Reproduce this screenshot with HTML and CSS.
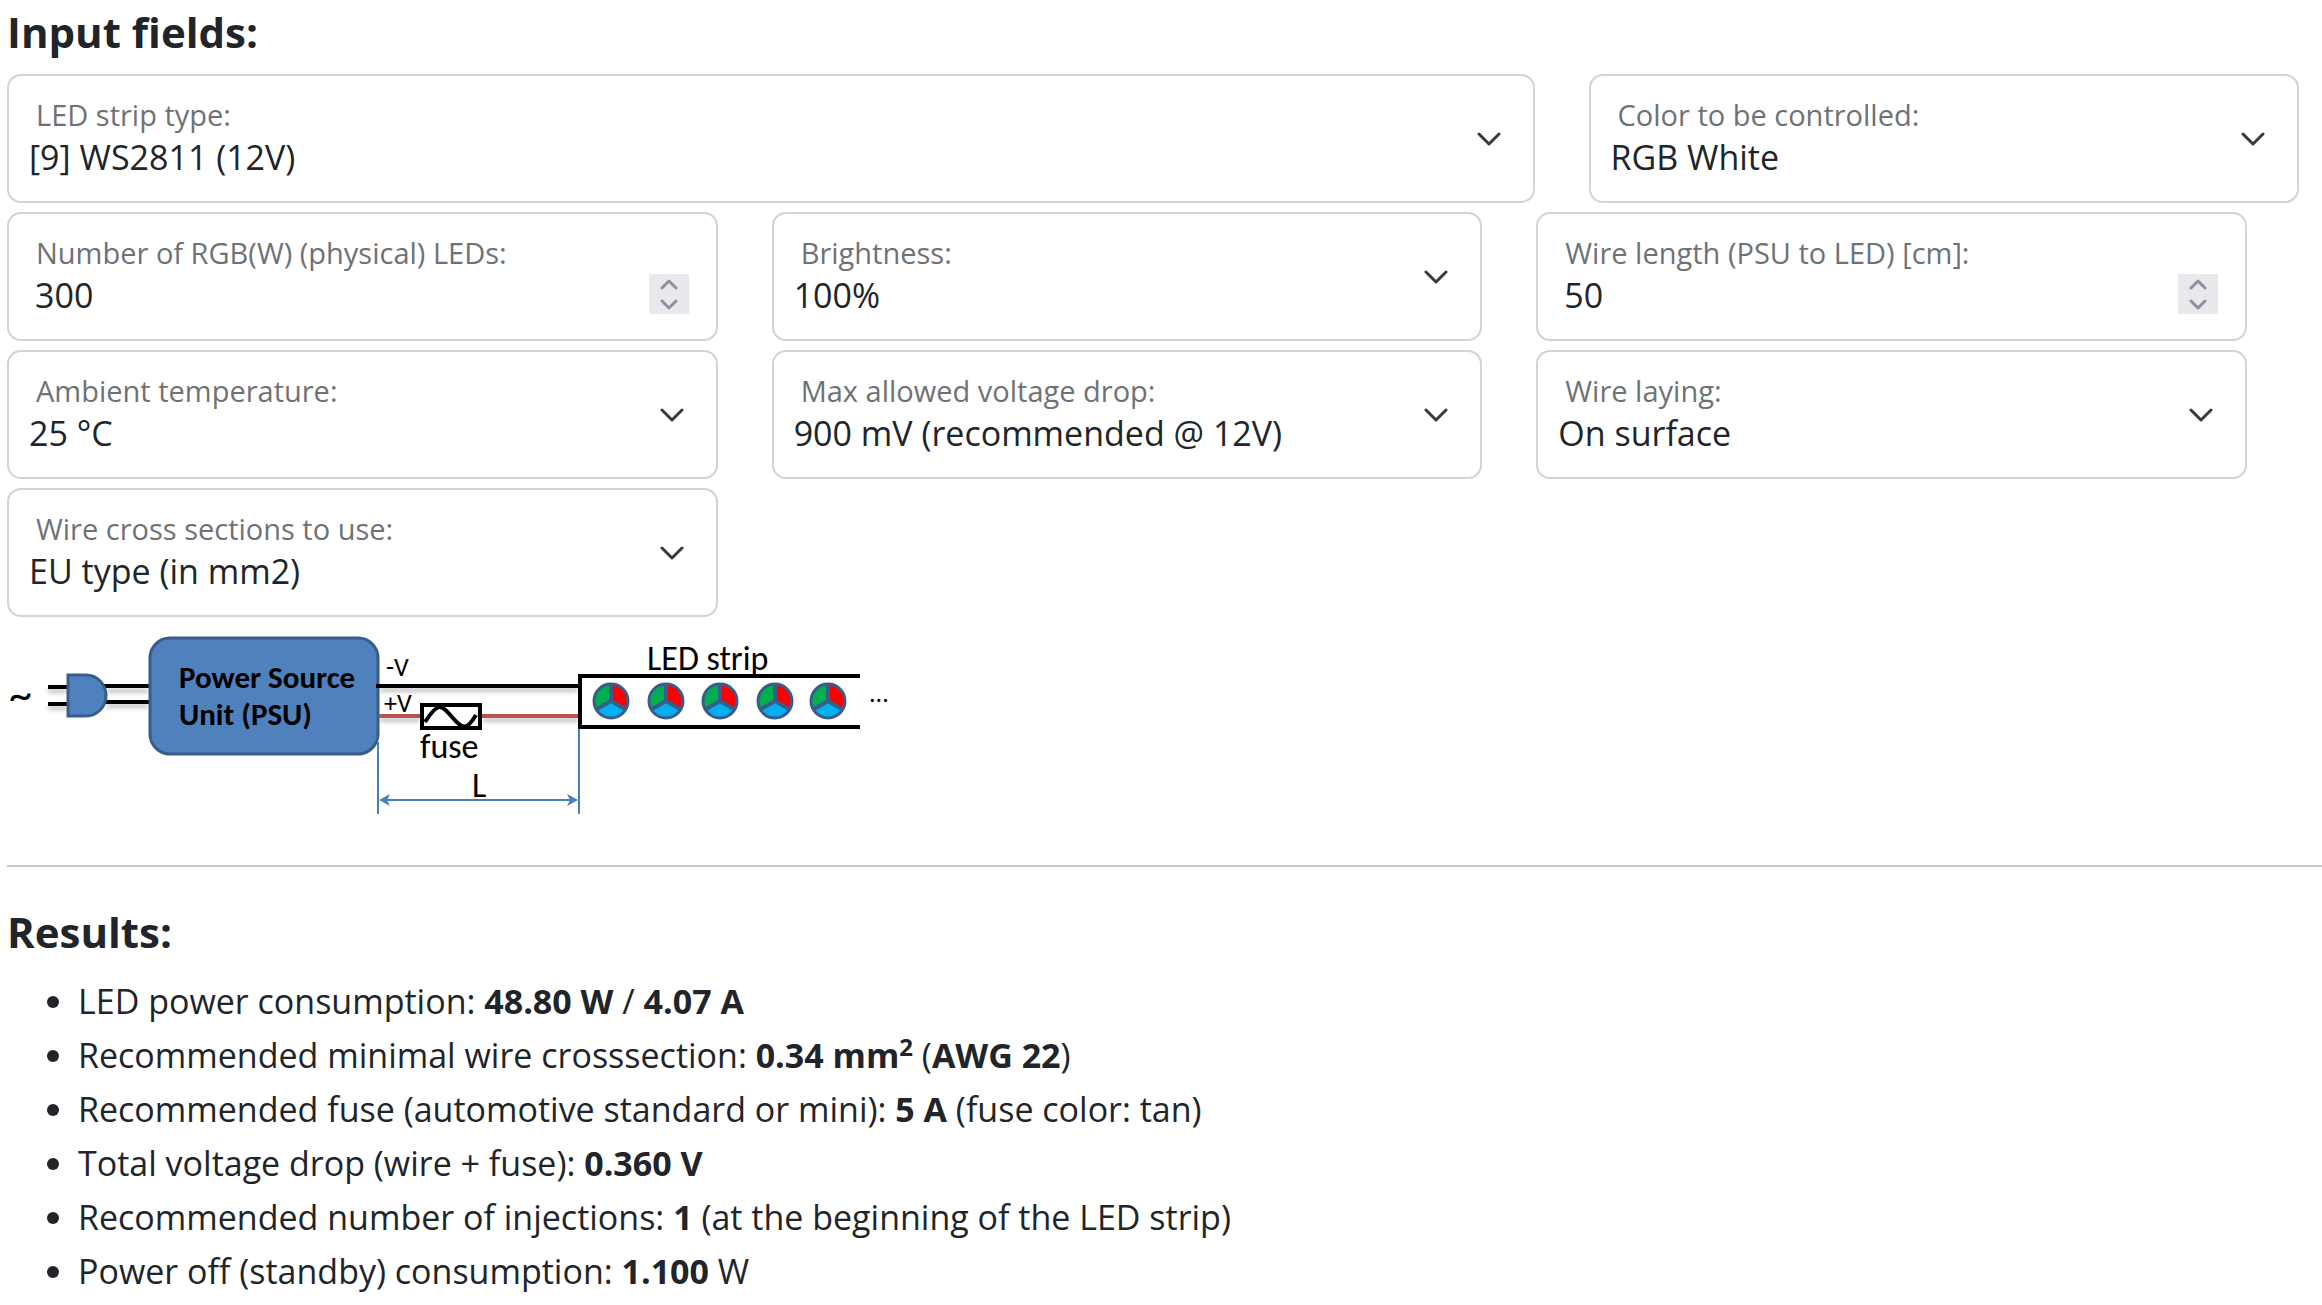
FILE: index.html
```html
<!DOCTYPE html>
<html lang="en">
<head>
<meta charset="utf-8">
<meta name="viewport" content="width=device-width, initial-scale=1">
<title>LED power calculator</title>
<link rel="stylesheet" href="styles.css">
</head>
<body>
<svg class="defs" aria-hidden="true">
  <symbol id="chevron" viewBox="0 0 24 14"><path d="M2 2l10 10L22 2" fill="none" stroke="#343a40" stroke-width="3" stroke-linecap="round" stroke-linejoin="round"/></symbol>
  <symbol id="step-up" viewBox="0 0 18 11"><path d="M2 9l7-7 7 7" fill="none" stroke="#8f8f9d" stroke-width="3" stroke-linecap="round" stroke-linejoin="round"/></symbol>
  <symbol id="step-down" viewBox="0 0 18 11"><path d="M2 2l7 7 7-7" fill="none" stroke="#8f8f9d" stroke-width="3" stroke-linecap="round" stroke-linejoin="round"/></symbol>
  <symbol id="led" viewBox="0 0 38 38">
    <path d="M19 19V2A17 17 0 0 1 33.7 27.5z" fill="#ff0000"/>
    <path d="M19 19L33.7 27.5A17 17 0 0 1 4.3 27.5z" fill="#00b0f0"/>
    <path d="M19 19L4.3 27.5A17 17 0 0 1 19 2z" fill="#00b050"/>
    <path d="M19 2V19M4.3 27.5L19 19l14.7 8.5" fill="none" stroke="#385d8a" stroke-width="4"/>
    <circle cx="19" cy="19" r="17" fill="none" stroke="#385d8a" stroke-width="3"/>
  </symbol>
</svg>
<main>
  <form>
    <h2>Input fields:</h2>
    <div class="row row-wide">
      <div class="field">
        <label for="strip">LED strip type:</label>
        <select id="strip"><option>[9] WS2811 (12V)</option></select>
        <svg class="chevron" aria-hidden="true"><use href="#chevron"/></svg>
      </div>
      <div class="field">
        <label for="color">Color to be controlled:</label>
        <select id="color"><option>RGB White</option></select>
        <svg class="chevron" aria-hidden="true"><use href="#chevron"/></svg>
      </div>
    </div>
    <div class="row">
      <div class="field">
        <label for="count">Number of RGB(W) (physical) LEDs:</label>
        <input id="count" type="number" value="300">
        <div class="stepper">
          <button type="button" aria-label="More LEDs"><svg aria-hidden="true"><use href="#step-up"/></svg></button>
          <button type="button" aria-label="Fewer LEDs"><svg aria-hidden="true"><use href="#step-down"/></svg></button>
        </div>
      </div>
      <div class="field">
        <label for="brightness">Brightness:</label>
        <select id="brightness"><option>100%</option></select>
        <svg class="chevron" aria-hidden="true"><use href="#chevron"/></svg>
      </div>
      <div class="field">
        <label for="length">Wire length (PSU to LED) [cm]:</label>
        <input id="length" type="number" value="50">
        <div class="stepper">
          <button type="button" aria-label="Longer wire"><svg aria-hidden="true"><use href="#step-up"/></svg></button>
          <button type="button" aria-label="Shorter wire"><svg aria-hidden="true"><use href="#step-down"/></svg></button>
        </div>
      </div>
      <div class="field">
        <label for="temperature">Ambient temperature:</label>
        <select id="temperature"><option>25 °C</option></select>
        <svg class="chevron" aria-hidden="true"><use href="#chevron"/></svg>
      </div>
      <div class="field">
        <label for="drop">Max allowed voltage drop:</label>
        <select id="drop"><option>900 mV (recommended @ 12V)</option></select>
        <svg class="chevron" aria-hidden="true"><use href="#chevron"/></svg>
      </div>
      <div class="field">
        <label for="laying">Wire laying:</label>
        <select id="laying"><option>On surface</option></select>
        <svg class="chevron" aria-hidden="true"><use href="#chevron"/></svg>
      </div>
      <div class="field">
        <label for="section">Wire cross sections to use:</label>
        <select id="section"><option>EU type (in mm2)</option></select>
        <svg class="chevron" aria-hidden="true"><use href="#chevron"/></svg>
      </div>
    </div>
  </form>

  <svg class="diagram" viewBox="7 628 892 196" role="img" aria-label="Wiring diagram">
    <!-- soft shadows under the wires -->
    <path class="wire-shadow" d="M48 691H67M48 708H67M107 691H148M107 706H148M380 690H578M380 720H420M483 720H578"/>
    <text class="tilde" x="9" y="710">~</text>
    <path class="wire" d="M48 687H67M48 704H67M104 686H150M104 702H150"/>
    <path class="solid" d="M68 675H86A20 20.500 0 0 1 86 716H68z"/>
    <rect class="solid" x="150" y="638" width="228" height="116" rx="20"/>
    <text class="psu" x="179" y="688">Power Source</text>
    <text class="psu" x="179" y="725">Unit (PSU)</text>
    <path class="dimension" d="M378 742V814M579 728V814M382 800H575"/>
    <path class="arrow" d="M379 800l11-6-3 6 3 6zM578 800l-11-6 3 6-3 6z"/>
    <path class="wire" d="M376 686H580"/>
    <path class="plus" d="M379 716H578"/>
    <rect x="422" y="705" width="58" height="23" class="fuse"/>
    <path class="wire" d="M425 722C438 702 441 704 452 717S467 730 476 715"/>
    <path class="wire" d="M860 676H580V727H860"/>
    <text class="volt" x="386" y="676">-V</text>
    <text class="volt" x="384" y="712">+V</text>
    <text class="caption" x="420" y="758">fuse</text>
    <text class="caption" x="472" y="797">L</text>
    <text class="caption" x="647" y="670">LED strip</text>
    <text class="volt" x="869" y="702">...</text>
    <use href="#led" x="592" y="682" width="38" height="38"/>
    <use href="#led" x="647" y="682" width="38" height="38"/>
    <use href="#led" x="701" y="682" width="38" height="38"/>
    <use href="#led" x="756" y="682" width="38" height="38"/>
    <use href="#led" x="809" y="682" width="38" height="38"/>
  </svg>

  <hr>

  <section>
    <h2>Results:</h2>
    <ul>
      <li>LED power consumption: <b>48.80 W</b> / <b>4.07 A</b></li>
      <li>Recommended minimal wire crosssection: <b>0.34 mm<sup>2</sup></b> (<b>AWG 22</b>)</li>
      <li>Recommended fuse (automotive standard or mini): <b>5 A</b> (fuse color: tan)</li>
      <li>Total voltage drop (wire + fuse): <b>0.360 V</b></li>
      <li>Recommended number of injections: <b>1</b> (at the beginning of the LED strip)</li>
      <li>Power off (standby) consumption: <b>1.100</b> W</li>
    </ul>
  </section>
</main>
</body>
</html>
```
FILE: styles.css
```css
* {
  box-sizing: border-box;
}

body {
  margin: 0;
  background: #fff;
  color: #212529;
  font-family: "Segoe UI", "Open Sans", "Noto Sans", sans-serif;
  font-size: 34px;
  line-height: 54px;
}

.defs {
  display: none;
}

main {
  padding: 7px 0 0 7px;
}

h2 {
  margin: 0 0 17px;
  font-size: 42px;
  line-height: 50px;
  font-weight: 700;
}

.row {
  display: grid;
  grid-template-columns: repeat(3, 1fr);
  gap: 9px 54px;
  margin-bottom: 9px;
  padding-right: 75px;
}

.row-wide {
  grid-template-columns: 215fr 100fr;
  padding-right: 23px;
}

/* Label, control and icon share one grid cell */
.field {
  display: grid;
  border: 2px solid #ced4da;
  border-radius: 14px;
}

.field > * {
  grid-area: 1 / 1;
}

label {
  z-index: 1;
  align-self: start;
  justify-self: start;
  padding: 17px 0 0 27px;
  color: #6f7275;
  font-size: 29px;
  line-height: 44px;
  pointer-events: none;
}

select,
input {
  appearance: none;
  width: 100%;
  margin: 0;
  padding: 57px 80px 20px 20px;
  border: 0;
  border-radius: 12px;
  background: transparent;
  color: inherit;
  font: inherit;
  line-height: 48px;
}

input {
  padding-left: 26px;
  appearance: textfield;
}

input::-webkit-inner-spin-button {
  display: none;
}

.chevron {
  align-self: center;
  justify-self: end;
  width: 24px;
  height: 14px;
  margin-right: 32px;
  pointer-events: none;
}

.stepper {
  display: flex;
  flex-direction: column;
  align-self: end;
  justify-self: end;
  width: 40px;
  height: 40px;
  margin: 0 27px 25px 0;
  background: #e9e9ed;
}

.stepper button {
  display: flex;
  flex: 1;
  align-items: center;
  justify-content: center;
  padding: 0;
  border: 0;
  background: none;
}

.stepper svg {
  width: 18px;
  height: 11px;
}

.diagram {
  display: block;
  width: 892px;
  max-width: 100%;
  margin-top: 11px;
  font-family: Calibri, Lato, sans-serif;
}

.wire,
.fuse {
  fill: none;
  stroke: #000;
  stroke-width: 4px;
}

.fuse {
  fill: #fff;
}

.plus {
  stroke: #b85450;
  stroke-width: 4px;
}

.wire-shadow {
  fill: none;
  stroke: #000;
  stroke-opacity: 0.25;
  stroke-width: 4px;
  filter: blur(2px);
}

.solid {
  fill: #4f81bd;
  stroke: #385d8a;
  stroke-width: 3px;
}

.dimension {
  fill: none;
  stroke: #4a7ebb;
  stroke-width: 2px;
}

.arrow {
  fill: #4a7ebb;
}

.psu {
  font-size: 31px;
  font-weight: 700;
}

.volt {
  font-size: 26px;
}

.caption {
  font-size: 34px;
}

.tilde {
  font-size: 46px;
}

hr {
  height: 2px;
  margin: 41px 0 0;
  border: 0;
  background: #c4c8c8;
}

section {
  padding-top: 40px;
}

ul {
  margin: 0;
  padding: 0 0 0 71px;
}

sup {
  font-size: 24px;
  line-height: 0;
}
```
